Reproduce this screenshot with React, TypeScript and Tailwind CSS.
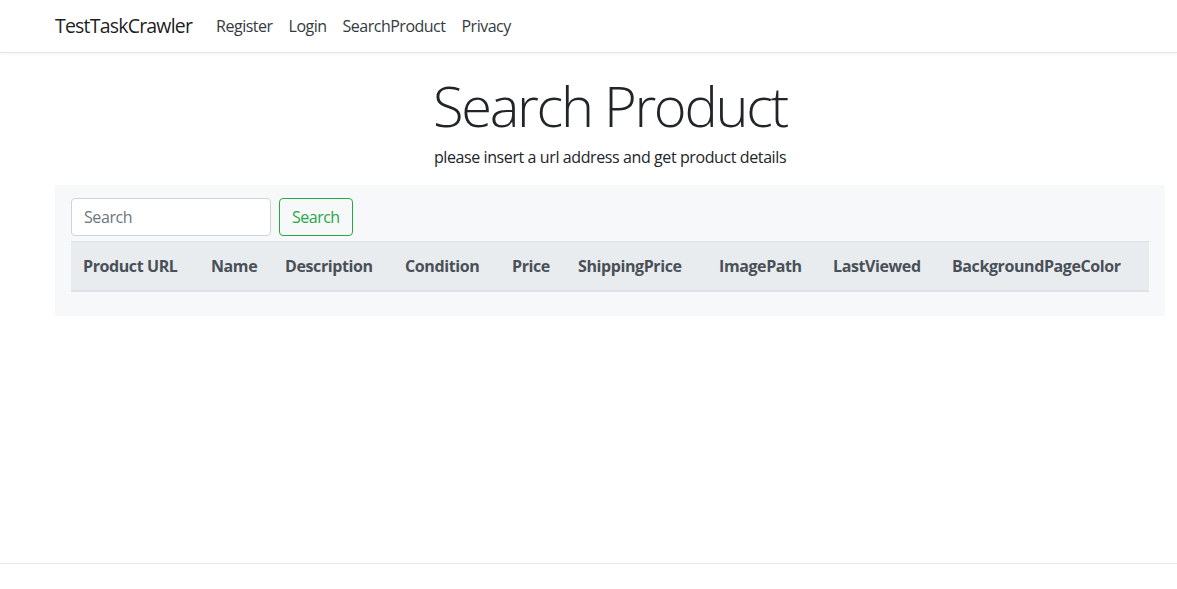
import React from 'react';

const columns = [
    { name: 'Product URL', width: 'w-[128px]' },
    { name: 'Name', width: 'w-[74px]' },
    { name: 'Description', width: 'w-[120px]' },
    { name: 'Condition', width: 'w-[107px]' },
    { name: 'Price', width: 'w-[66px]' },
    { name: 'ShippingPrice', width: 'w-[141px]' },
    { name: 'ImagePath', width: 'w-[114px]' },
    { name: 'LastViewed', width: 'w-[119px]' },
    { name: 'BackgroundPageColor', width: '' },
];

const navItems = ['Register', 'Login', 'SearchProduct', 'Privacy'];

const App = () => {
    return (
        <div className="h-[589px] overflow-hidden bg-white text-[#212529] font-['Open_Sans',sans-serif]">
            {/* Navbar */}
            <nav className="h-[53px] border-b border-[#e5e5e5] bg-white shadow-[0_1px_3px_rgba(0,0,0,0.05)]">
                <div className="flex items-center h-full pl-[55px]">
                    <a className="text-[19.5px] text-[rgba(0,0,0,0.9)] mr-[16px] tracking-[-0.8px]">TestTaskCrawler</a>
                    <ul className="flex">
                        {navItems.map((item) => (
                            <li key={item}>
                                <a className="block px-[8px] text-[16px] text-[#343a40] tracking-[-0.5px]">{item}</a>
                            </li>
                        ))}
                    </ul>
                </div>
            </nav>

            <main className="ml-[55px] w-[1110px] min-h-[510px]">
                <div className="text-center pt-[19px]">
                    <h1 className="text-[56px] font-light leading-[1.2] text-[#212529] tracking-[-2.3px]">Search Product</h1>
                    <p className="text-[16px] leading-[24px] mt-[6px] tracking-[-0.4px]">please insert a url address and get product details</p>
                </div>

                <div className="bg-[#f7f8f9] mt-[16px] px-[16px] pt-[13px] pb-[24px]">
                    <form className="flex gap-[8px]">
                        <input
                            type="text"
                            placeholder="Search"
                            className="w-[200px] h-[38px] px-[12px] rounded-[4px] border border-[#ced4da] bg-white text-[16px] tracking-[-0.4px] placeholder:text-[#6c757d] outline-none"
                        />
                        <button
                            type="button"
                            className="h-[38px] px-[12px] rounded-[4px] border border-[#28a745] text-[#28a745] text-[16px] tracking-[-0.5px] bg-transparent"
                        >
                            Search
                        </button>
                    </form>

                    <table className="w-full mt-[5px] border-collapse">
                        <thead>
                            <tr className="bg-[#e9ecef] border-t border-[#dee2e6] border-b-2">
                                {columns.map((col) => (
                                    <th
                                        key={col.name}
                                        className={`${col.width} text-left p-[12px] text-[16px] leading-[24px] font-bold text-[#495057] tracking-[-0.4px] whitespace-nowrap`}
                                    >
                                        {col.name}
                                    </th>
                                ))}
                            </tr>
                        </thead>
                    </table>
                </div>
            </main>

            {/* Footer */}
            <footer className="border-t border-[#e5e5e5] leading-[60px] text-[16px] text-[#6c757d] whitespace-nowrap">
                <div className="pl-[55px] pt-[1px]">
                    © 2020 - TestTaskCrawler - <a className="text-[#007bff]">Privacy</a>
                </div>
            </footer>
        </div>
    );
};

export default App;
